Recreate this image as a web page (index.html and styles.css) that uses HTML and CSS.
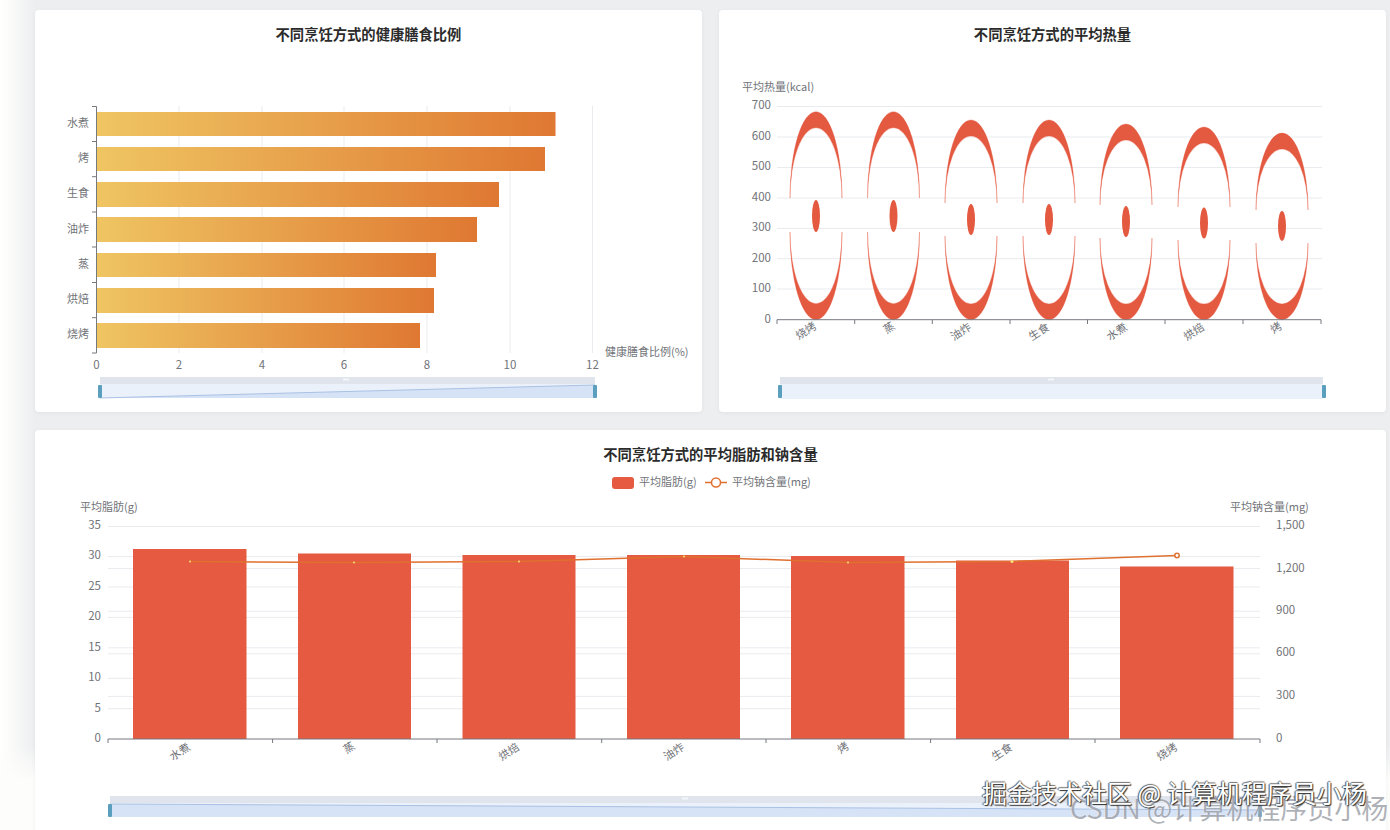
FILE: index.html
```html
<!DOCTYPE html>
<html lang="zh-CN">

<head>
  <meta charset="UTF-8" />
  <meta name="viewport" content="width=device-width, initial-scale=1.0" />
  <title>烹饪方式分析</title>
  <link rel="stylesheet" href="styles.css">
</head>

<body>
  <div class="dashboard">
    <!-- Healthy meal ratio -->
    <section class="card">
      <h2>不同烹饪方式的健康膳食比例</h2>
      <svg class="chart" viewBox="35 43 667 369">
        <defs>
          <linearGradient id="barFill" x1="0" y1="0" x2="1" y2="0">
            <stop offset="0" stop-color="#efc562" />
            <stop offset="1" stop-color="#df7832" />
          </linearGradient>
        </defs>
        <g class="grid">
          <line x1="179" y1="106" x2="179" y2="353" />
          <line x1="262" y1="106" x2="262" y2="353" />
          <line x1="344" y1="106" x2="344" y2="353" />
          <line x1="427" y1="106" x2="427" y2="353" />
          <line x1="510" y1="106" x2="510" y2="353" />
          <line x1="592.5" y1="106" x2="592.5" y2="353" />
        </g>
        <g fill="url(#barFill)">
          <rect x="97" y="112" width="458.5" height="24" />
          <rect x="97" y="147" width="448" height="24" />
          <rect x="97" y="182" width="402" height="25" />
          <rect x="97" y="217" width="380" height="25" />
          <rect x="97" y="253" width="339" height="24" />
          <rect x="97" y="288" width="337" height="25" />
          <rect x="97" y="323" width="323" height="25" />
        </g>
        <path class="axis" d="M92 106.5H96.5V353H92M92 141.5H96.5M92 176.7H96.5M92 212H96.5M92 247H96.5M92 282.5H96.5M92 317.7H96.5" />
        <g class="tick" text-anchor="end">
          <text x="89" y="127">水煮</text>
          <text x="89" y="162">烤</text>
          <text x="89" y="197">生食</text>
          <text x="89" y="233">油炸</text>
          <text x="89" y="268">蒸</text>
          <text x="89" y="303">烘焙</text>
          <text x="89" y="338">烧烤</text>
        </g>
        <g class="tick num" text-anchor="middle">
          <text x="96.5" y="369">0</text>
          <text x="179" y="369">2</text>
          <text x="262" y="369">4</text>
          <text x="344" y="369">6</text>
          <text x="427" y="369">8</text>
          <text x="510" y="369">10</text>
          <text x="592.5" y="369">12</text>
        </g>
        <text class="tick" x="605" y="356">健康膳食比例(%)</text>
        <!-- data zoom -->
        <rect class="zoom-top" x="100" y="377" width="495" height="7" />
        <rect class="zoom-body" x="100" y="384" width="495" height="14" />
        <path class="zoom-area" d="M100 398L595 385V398Z" />
        <path class="zoom-line" d="M100 398L595 385" />
        <rect class="zoom-mark" x="343" y="378.5" width="6" height="2" />
        <rect class="zoom-handle" x="98" y="385" width="4" height="13" rx="1" />
        <rect class="zoom-handle" x="593" y="385" width="4" height="13" rx="1" />
      </svg>
    </section>

    <!-- Average calories -->
    <section class="card">
      <h2>不同烹饪方式的平均热量</h2>
      <svg class="chart" viewBox="719 43 667 369">
        <g class="grid">
          <line x1="777" y1="106.5" x2="1322" y2="106.5" />
          <line x1="777" y1="137" x2="1322" y2="137" />
          <line x1="777" y1="167.5" x2="1322" y2="167.5" />
          <line x1="777" y1="198" x2="1322" y2="198" />
          <line x1="777" y1="228.5" x2="1322" y2="228.5" />
          <line x1="777" y1="258.7" x2="1322" y2="258.7" />
          <line x1="777" y1="289" x2="1322" y2="289" />
        </g>
        <g class="arch">
          <path d="M790 198A26 86.3 0 0 1 842 198A26 70.3 0 0 0 790 198Z" />
          <ellipse cx="816" cy="216" rx="4" ry="16" />
          <path d="M790 232A26 87.7 0 0 0 842 232A26 71.7 0 0 1 790 232Z" />

          <path d="M867.5 198A26 86.3 0 0 1 919.5 198A26 70.3 0 0 0 867.5 198Z" />
          <ellipse cx="893.5" cy="216" rx="4" ry="16" />
          <path d="M867.5 232A26 87.7 0 0 0 919.5 232A26 71.7 0 0 1 867.5 232Z" />

          <path d="M945 203A26 83 0 0 1 997 203A26 67 0 0 0 945 203Z" />
          <ellipse cx="971" cy="219.5" rx="4" ry="15.5" />
          <path d="M945 236A26 83.7 0 0 0 997 236A26 68 0 0 1 945 236Z" />

          <path d="M1023 203A26 83 0 0 1 1075 203A26 67 0 0 0 1023 203Z" />
          <ellipse cx="1049" cy="219.5" rx="4" ry="15.5" />
          <path d="M1023 236A26 83.7 0 0 0 1075 236A26 68 0 0 1 1023 236Z" />

          <path d="M1100 205A26 81 0 0 1 1152 205A26 65 0 0 0 1100 205Z" />
          <ellipse cx="1126" cy="221.5" rx="4" ry="15.5" />
          <path d="M1100 238A26 81.7 0 0 0 1152 238A26 66 0 0 1 1100 238Z" />

          <path d="M1178 207A26 80 0 0 1 1230 207A26 64 0 0 0 1178 207Z" />
          <ellipse cx="1204" cy="223" rx="4" ry="15.5" />
          <path d="M1178 240A26 79.7 0 0 0 1230 240A26 64 0 0 1 1178 240Z" />

          <path d="M1256 210A26 77 0 0 1 1308 210A26 61 0 0 0 1256 210Z" />
          <ellipse cx="1282" cy="226" rx="4" ry="15" />
          <path d="M1256 243A26 76.7 0 0 0 1308 243A26 61 0 0 1 1256 243Z" />
        </g>
        <path class="axis" d="M777 324V319.7H1321V324M854.7 319.7V324M932.3 319.7V324M1010 319.7V324M1087.5 319.7V324M1165 319.7V324M1243 319.7V324" />
        <text class="tick" x="742" y="91">平均热量(kcal)</text>
        <g class="tick num" text-anchor="end">
          <text x="771" y="109">700</text>
          <text x="771" y="140">600</text>
          <text x="771" y="170">500</text>
          <text x="771" y="201">400</text>
          <text x="771" y="231">300</text>
          <text x="771" y="262">200</text>
          <text x="771" y="292">100</text>
          <text x="771" y="323">0</text>
        </g>
        <g class="tick" text-anchor="middle">
          <text transform="translate(808 334) rotate(-33)">烧烤</text>
          <text transform="translate(891 331) rotate(-33)">蒸</text>
          <text transform="translate(963 335) rotate(-33)">油炸</text>
          <text transform="translate(1041 335) rotate(-33)">生食</text>
          <text transform="translate(1119 335) rotate(-33)">水煮</text>
          <text transform="translate(1196 335) rotate(-33)">烘焙</text>
          <text transform="translate(1278 331) rotate(-33)">烤</text>
        </g>
        <!-- data zoom -->
        <rect class="zoom-top" x="780" y="377" width="543" height="7" />
        <rect class="zoom-body" x="780" y="384" width="543" height="15" />
        <rect class="zoom-mark" x="1048" y="378.5" width="6" height="2" />
        <rect class="zoom-handle" x="778" y="385" width="4" height="13" rx="1" />
        <rect class="zoom-handle" x="1322" y="385" width="4" height="13" rx="1" />
      </svg>
    </section>

    <!-- Fat and sodium -->
    <section class="card card-wide">
      <h2>不同烹饪方式的平均脂肪和钠含量</h2>
      <svg class="chart" viewBox="35 463 1351 367">
        <rect class="legend-bar" x="612" y="477" width="22" height="12" rx="3" />
        <text class="tick" x="639" y="486">平均脂肪(g)</text>
        <path class="sodium" d="M705 482.5H727" />
        <circle class="sodium-dot" cx="716" cy="482.5" r="4.5" />
        <text class="tick" x="732" y="486">平均钠含量(mg)</text>

        <g class="grid">
          <line x1="108" y1="526.5" x2="1260" y2="526.5" />
          <line x1="108" y1="556.6" x2="1260" y2="556.6" />
          <line x1="108" y1="568.6" x2="1260" y2="568.6" />
          <line x1="108" y1="587" x2="1260" y2="587" />
          <line x1="108" y1="611.2" x2="1260" y2="611.2" />
          <line x1="108" y1="617.4" x2="1260" y2="617.4" />
          <line x1="108" y1="647.8" x2="1260" y2="647.8" />
          <line x1="108" y1="653.8" x2="1260" y2="653.8" />
          <line x1="108" y1="678.3" x2="1260" y2="678.3" />
          <line x1="108" y1="696.4" x2="1260" y2="696.4" />
          <line x1="108" y1="708.7" x2="1260" y2="708.7" />
        </g>
        <g class="fat-bar">
          <rect x="133" y="549" width="113.5" height="190" />
          <rect x="298" y="553.5" width="113" height="185.5" />
          <rect x="462.5" y="555" width="113" height="184" />
          <rect x="627" y="555" width="113" height="184" />
          <rect x="791" y="556" width="113.5" height="183" />
          <rect x="956" y="560.5" width="113" height="178.5" />
          <rect x="1120" y="566.5" width="113.5" height="172.5" />
        </g>
        <path class="axis" d="M108 743V739H1260V743M272.6 739V743M437 739V743M601.7 739V743M766 739V743M930.6 739V743M1095 739V743" />
        <polyline class="sodium" points="190,561.5 354,562.5 519,561.5 684,556.5 848,562.5 1012,561.5 1177,555.5" />
        <g class="sodium-pin">
          <circle cx="190" cy="561.5" r="1" />
          <circle cx="354" cy="562.5" r="1" />
          <circle cx="519" cy="561.5" r="1" />
          <circle cx="684" cy="556.5" r="1" />
          <circle cx="848" cy="562.5" r="1" />
          <circle cx="1012" cy="561.5" r="1.5" />
        </g>
        <circle class="sodium-dot" cx="1177" cy="555.5" r="2.2" />

        <text class="tick" x="80" y="511">平均脂肪(g)</text>
        <text class="tick" x="1230" y="511">平均钠含量(mg)</text>
        <g class="tick num" text-anchor="end">
          <text x="101" y="529">35</text>
          <text x="101" y="559">30</text>
          <text x="101" y="590">25</text>
          <text x="101" y="620">20</text>
          <text x="101" y="651">15</text>
          <text x="101" y="681">10</text>
          <text x="101" y="712">5</text>
          <text x="101" y="742">0</text>
        </g>
        <g class="tick num">
          <text x="1276" y="529">1,500</text>
          <text x="1276" y="572">1,200</text>
          <text x="1276" y="614">900</text>
          <text x="1276" y="656">600</text>
          <text x="1276" y="699">300</text>
          <text x="1276" y="742">0</text>
        </g>
        <g class="tick" text-anchor="middle">
          <text transform="translate(182 755) rotate(-33)">水煮</text>
          <text transform="translate(351 751) rotate(-33)">蒸</text>
          <text transform="translate(511 755) rotate(-33)">烘焙</text>
          <text transform="translate(676 755) rotate(-33)">油炸</text>
          <text transform="translate(845 751) rotate(-33)">烤</text>
          <text transform="translate(1004 755) rotate(-33)">生食</text>
          <text transform="translate(1169 755) rotate(-33)">烧烤</text>
        </g>
        <!-- data zoom -->
        <rect class="zoom-top" x="110" y="796" width="1150" height="7" />
        <rect class="zoom-body" x="110" y="803" width="1150" height="14" />
        <path class="zoom-area" d="M110 804L1260 810V817H110Z" />
        <path class="zoom-line" d="M110 804L1260 810" />
        <rect class="zoom-mark" x="682" y="797.5" width="6" height="2" />
        <rect class="zoom-handle" x="108" y="804" width="4" height="13" rx="1" />
        <rect class="zoom-handle" x="1258" y="804" width="4" height="13" rx="1" />
      </svg>
    </section>
  </div>

  <div class="mark mark-csdn">CSDN @计算机程序员小杨</div>
  <div class="mark mark-juejin">掘金技术社区 @ 计算机程序员小杨</div>
</body>

</html>
```

FILE: styles.css
```css
* {
  margin: 0;
  padding: 0;
  box-sizing: border-box;
}

html,
body {
  height: 100%;
  overflow: hidden;
}

body {
  position: relative;
  font-family: "Noto Sans CJK SC", "Noto Sans", sans-serif;
  background:
    linear-gradient(180deg, rgba(253, 253, 251, 0) 745px, #fdfdfb 780px),
    linear-gradient(90deg, #ffffff 0, #fbfbfa 10px, #eceef0 35px);
}

.dashboard {
  display: grid;
  grid-template-columns: 667px 667px;
  grid-template-rows: 402px 420px;
  gap: 18px 17px;
  padding: 10px 0 0 35px;
}

.card {
  background: #ffffff;
  border-radius: 4px;
  box-shadow: 0 1px 4px rgba(0, 0, 0, 0.05);
  overflow: hidden;
}

.card-wide {
  grid-column: span 2;
}

.card h2 {
  padding-top: 14px;
  font-size: 14.3px;
  font-weight: 700;
  line-height: 19px;
  text-align: center;
  color: #2b2b2b;
}

.chart {
  display: block;
  width: 100%;
}

.card .chart {
  height: 369px;
}

.card-wide .chart {
  height: 367px;
}

.tick {
  font-size: 11px;
  fill: #717378;
}

.tick.num {
  font-size: 11.5px;
}

.grid line {
  stroke: #e9ebef;
  stroke-width: 1;
}

.axis {
  fill: none;
  stroke: #77797f;
  stroke-width: 1;
}

.arch path,
.arch ellipse {
  fill: #e45a41;
}

/* keeps the thin tips of the arcs visible */
.arch path {
  stroke: #e45a41;
  stroke-width: 0.5;
  stroke-opacity: 0.7;
}

.fat-bar rect,
.legend-bar {
  fill: #e55a41;
}

.sodium {
  fill: none;
  stroke: #e0702f;
  stroke-width: 1.5;
}

.sodium-dot {
  fill: #ffffff;
  stroke: #e0702f;
  stroke-width: 1.5;
}

.sodium-pin circle {
  fill: #f6e27a;
}

.zoom-top {
  fill: #dfe4ed;
}

.zoom-body {
  fill: #ebf1fb;
}

.zoom-area {
  fill: #d6e2f5;
}

.zoom-line {
  fill: none;
  stroke: #a9c1e4;
  stroke-width: 1;
}

.zoom-mark {
  fill: #f4f6fa;
}

.zoom-handle {
  fill: #5b9fbe;
}

/* Site watermarks lying over the screenshot */
.mark {
  position: absolute;
  white-space: nowrap;
}

.mark-juejin {
  left: 982px;
  top: 777px;
  font-size: 25px;
  line-height: 30px;
  color: #ffffff;
  text-shadow:
    1px 1px 1px #2a2a2a,
    -1px 0 1px #555555,
    0 -1px 1px #777777;
}

.mark-csdn {
  left: 1070px;
  top: 793px;
  font-size: 27px;
  line-height: 30px;
  color: rgba(120, 124, 135, 0.6);
  text-shadow: 0 0 2px rgba(255, 255, 255, 0.7);
}
```
